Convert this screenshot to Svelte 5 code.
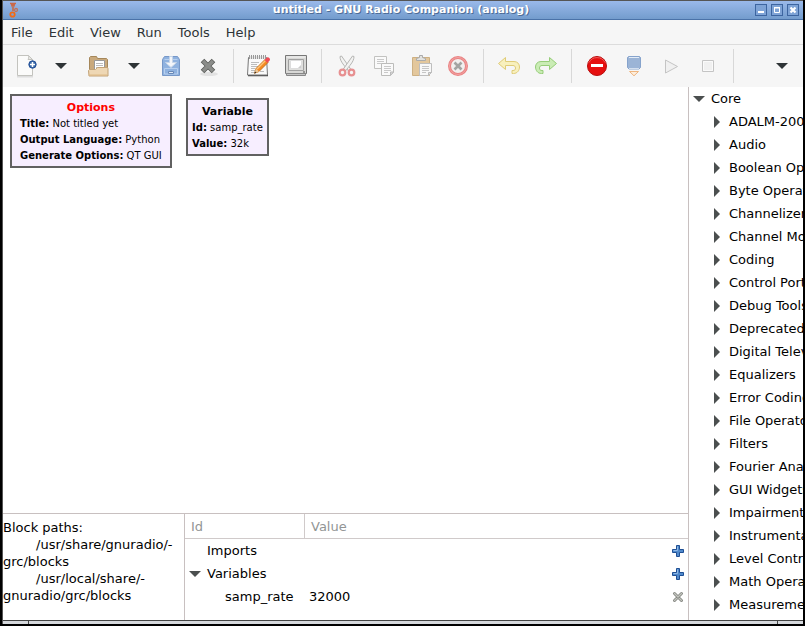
<script>
  const menus = ['File', 'Edit', 'View', 'Run', 'Tools', 'Help'];

  const groups = [
    [
      { icon: 'new', label: 'New', drop: true },
      { icon: 'open', label: 'Open', drop: true },
      { icon: 'save', label: 'Save' },
      { icon: 'close', label: 'Close' }
    ],
    [
      { icon: 'props', label: 'Properties' },
      { icon: 'screen', label: 'Screen capture' }
    ],
    [
      { icon: 'cut', label: 'Cut', off: true },
      { icon: 'copy', label: 'Copy', off: true },
      { icon: 'paste', label: 'Paste', off: true },
      { icon: 'delete', label: 'Delete', off: true }
    ],
    [
      { icon: 'undo', label: 'Undo', off: true },
      { icon: 'redo', label: 'Redo', off: true }
    ],
    [
      { icon: 'errors', label: 'Errors' },
      { icon: 'generate', label: 'Generate', off: true },
      { icon: 'play', label: 'Execute', off: true },
      { icon: 'stop', label: 'Kill', off: true }
    ]
  ];

  const categories = [
    'ADALM-2000', 'Audio', 'Boolean Operators', 'Byte Operators', 'Channelizers',
    'Channel Models', 'Coding', 'Control Port', 'Debug Tools', 'Deprecated',
    'Digital Television', 'Equalizers', 'Error Coding', 'File Operators', 'Filters',
    'Fourier Analysis', 'GUI Widgets', 'Impairment Models', 'Instrumentation',
    'Level Controllers', 'Math Operators', 'Measurement Tools'
  ];

  const blocks = [
    {
      x: 7, y: 7, title: 'Options', invalid: true,
      params: [['Title', 'Not titled yet'], ['Output Language', 'Python'], ['Generate Options', 'QT GUI']]
    },
    { x: 183, y: 11, title: 'Variable', params: [['Id', 'samp_rate'], ['Value', '32k']] }
  ];

  const consoleText =
    'Block paths:\n\t/usr/share/gnuradio/-\ngrc/blocks\n\t/usr/local/share/-\ngnuradio/grc/blocks';

  let coreOpen = $state(true);
  let varsOpen = $state(true);
</script>

{#snippet caret()}
  <svg width="12" height="6" viewBox="0 0 12 6" aria-hidden="true"><path d="M0 0h12L6 6z" fill="#2e3436" /></svg>
{/snippet}

{#snippet arrow(open)}
  <svg width="12" height="12" viewBox="0 0 12 12" aria-hidden="true">
    <path d={open ? 'M0 3h12L6 9z' : 'M3 0l6 6-6 6z'} fill="#4b4f4f" />
  </svg>
{/snippet}

{#snippet plus()}
  <svg width="12" height="12" viewBox="0 0 12 12" aria-hidden="true">
    <path d="M4.500.500h3v4h4v3h-4v4h-3v-4h-4v-3h4z" fill="#5089cb" stroke="#1f4f94" />
    <path d="M5.500 1.500v4h-4" fill="none" stroke="#8fb8e6" />
  </svg>
{/snippet}

{#snippet icon(name)}
  <svg width="24" height="24" viewBox="0 0 24 24" fill="none" aria-hidden="true">
    {#if name === 'new'}
      <path d="M4 22.500h16" stroke="#ddd" stroke-width="2" />
      <path d="M4.500 1.500h11l4 4v16h-15z" fill="#fbfbfa" stroke="#c3c3be" />
      <path d="M15.500 1.500c.5 2 0 3-.5 4h4.500z" fill="#e8e8e5" stroke="#c3c3be" />
      <circle cx="19.500" cy="10.500" r="3.700" fill="#3465a4" stroke="#27529a" />
      <path d="M19.500 8v5M17 10.500h5" stroke="#fff" stroke-width="1.600" />
    {:else if name === 'open'}
      <path d="M3.500 21V3.500l1-1h6l1 2h9l1 1V18" fill="#c9a97c" stroke="#a5875a" />
      <path d="M8.500 6.500h10v10h-10z" fill="#fff" stroke="#999" />
      <path d="M10 9.500h7M10 11.500h7M10 13.500h5" stroke="#bbb" />
      <path d="M2.500 16.500l1-1h6l2-2h10l.5 1v7.500h-19z" fill="#eed7b4" stroke="#c2a276" />
      <path d="M3 21h18" stroke="#dfba86" />
    {:else if name === 'save'}
      <path d="M3.500 5.500l2-3h13l2 3v16h-17z" fill="#8fb2df" stroke="#7798c8" />
      <path d="M5.500 5.500h13M5.500 14.500h13v5.500h-13z" stroke="#b7cfee" />
      <path d="M9.500 17.500v2h5v-2z" fill="#dfe9f5" stroke="#6889b8" />
      <path d="M10.500 2.500h3v6h4L12 13.500 6.500 8.500h4z" fill="#f3f6fa" stroke="#c6d5e8" />
    {:else if name === 'close'}
      <ellipse cx="13" cy="20" rx="9" ry="2" fill="#e2e2e2" />
      <path d="M6.500 6.500l11 11M17.500 6.500l-11 11" stroke="#5a5c59" stroke-width="5" />
      <path d="M7 7l10 10M17 7l-10 10" stroke="#8b8d8a" stroke-width="3.500" />
    {:else if name === 'props'}
      <path d="M1 21.500h20" stroke="#444" stroke-width="1.500" />
      <path d="M1.500 3.500h18l1 17.500h-20z" fill="#fafafa" stroke="#777" />
      <path d="M2 3.500h17" stroke="#e7e7e7" stroke-width="3" />
      <path d="M2.500 1v4M4.500 1v4M6.500 1v4M8.500 1v4M10.500 1v4M12.500 1v4M14.500 1v4M16.500 1v4M18.500 1v4" stroke="#999" />
      <path d="M4 8.500h8M4 10.500h6M4 12.500h7M4 14.500h4M4 16.500h4M4 18.500h5M13 17.500h4" stroke="#bcbcbc" />
      <path d="M9 14.500L18 5.500l3 3-9 9-4.500 1.800z" fill="#f58a20" stroke="#b86410" stroke-width=".8" />
      <path d="M10 15l9-9" stroke="#fcc47a" stroke-width="1.500" />
      <path d="M17.500 6l3 3 2.500-3c0-2-1.500-3-3-2.500z" fill="#ef4b55" />
      <path d="M9 14.500l3 3-4.500 1.800z" fill="#e9c79a" />
      <path d="M7.300 19.500l.8-2 1.200 1.200z" fill="#222" />
    {:else if name === 'screen'}
      <path d="M1.500 1.500h21v18h-21z" fill="#d8d8d6" stroke="#777" />
      <path d="M2.500 3h19" stroke="#f5f5f5" />
      <path d="M4.500 5.500h15v11h-15z" fill="#e0e0de" stroke="#a0a0a0" />
      <path d="M6.500 6.500h11v8h-11z" fill="#fff" stroke="#ddd" />
      <path d="M14 14l3-3v3z" fill="#ccc" />
      <path d="M2.500 19.500h19v2h-19z" fill="#c5c5c5" stroke="#888" />
      <path d="M19 18h2" stroke="#555" />
    {:else if name === 'cut'}
      <path d="M5 2.500L6.500 2 16 15.500l-2.500 1.500C10 12 5 8 5 2.500z" fill="#f2f2f1" stroke="#b5b5b3" />
      <path d="M19 2.500L17.500 2 8 15.500l2.500 1.500C14 12 19 8 19 2.500z" fill="#f2f2f1" stroke="#b5b5b3" />
      <circle cx="7.500" cy="18.500" r="2.800" stroke="#e79091" stroke-width="2.200" />
      <circle cx="16.500" cy="18.500" r="2.800" stroke="#e79091" stroke-width="2.200" />
    {:else if name === 'copy'}
      <path d="M2.500 2.500h12v12h-12z" fill="#fafafa" stroke="#c2c2c0" />
      <path d="M5 5.500h7M5 7.500h7M5 9.500h5" stroke="#c9c9c9" />
      <path d="M9.500 9.500h12v8.500l-3 3.500h-9z" fill="#fafafa" stroke="#bcbcba" />
      <path d="M12 12.500h7M12 14.500h7M12 16.500h7M12 18.500h4" stroke="#c9c9c9" />
      <path d="M21.500 18h-3v3.500z" fill="#ddd" stroke="#bbb" />
    {:else if name === 'paste'}
      <path d="M3.500 3.500h17v18h-17z" fill="#e3c79c" stroke="#cdb083" />
      <path d="M7.500 6.500v-2l3-1v-2h3v2l3 1v2z" fill="#e2e2df" stroke="#aaa" />
      <path d="M10.500 9.500h12v9l-3 3h-9z" fill="#f8f8f8" stroke="#bebebe" />
      <path d="M13 12.500h7M13 14.500h7M13 16.500h7M13 18.500h4" stroke="#c6c6c6" />
      <path d="M22.500 18.500h-3v3z" fill="#ddd" stroke="#bbb" />
    {:else if name === 'delete'}
      <circle cx="12" cy="12" r="8.500" fill="#f1efee" stroke="#e98282" stroke-width="3" />
      <circle cx="12" cy="12" r="8.500" stroke="#f3a3a3" />
      <path d="M8.500 8.500l7 7M15.500 8.500l-7 7" stroke="#a3a4a2" stroke-width="2.600" />
    {:else if name === 'undo'}
      <path d="M1.500 9.500l7-6v4H17c3.500 0 5.500 2.500 5.500 5.500s-2 6.500-6 6.500h-1.500v-3h1c2 0 2.500-1 2.500-2.500s-1-2.500-2.500-2.500H8.500v4z" fill="#f8f0bd" stroke="#e0cc78" />
    {:else if name === 'redo'}
      <path d="M22.500 9.500l-7-6v4H7c-3.500 0-5.500 2.500-5.500 5.500s2 6.500 6 6.500H9v-3H8c-2 0-2.500-1-2.500-2.500s1-2.500 2.500-2.500h7.500v4z" fill="#caecb5" stroke="#96cd79" />
    {:else if name === 'errors'}
      <circle cx="12" cy="12" r="9.500" fill="#e60f0f" stroke="#b90d0d" />
      <path d="M4 8.500a9 9 0 0 1 16 0" stroke="#f05a5a" />
      <path d="M6 10h12v3H6z" fill="#fff" />
    {:else if name === 'generate'}
      <path d="M5.500 3.500l1-1h11l1 1v10l-1.500 1.500h-10l-1.500-1.500z" fill="#9bb4d6" stroke="#86a3cc" />
      <path d="M7 3.500h10" stroke="#e3ecf7" />
      <path d="M7 14.500h10" stroke="#d3dfef" />
      <path d="M7.500 17.500h9L12 21.800z" fill="#fdeedd" stroke="#eeb57f" />
    {:else if name === 'play'}
      <path d="M6.500 6v13l12-6.500z" fill="#f0f0f0" stroke="#c4c4c4" />
    {:else if name === 'stop'}
      <path d="M6.500 6.500h11v11h-11z" fill="#f0f0f0" stroke="#c4c4c4" />
      <path d="M7.500 7.500h9v9h-9z" stroke="#fafafa" />
    {/if}
  </svg>
{/snippet}

<div class="window">
  <header class="titlebar">
    <svg class="logo" width="10" height="16" viewBox="0 0 10 16" fill="none" aria-hidden="true">
      <path d="M1 1.500h6M2 3h4M2.500 4.500h3" stroke="#c9694a" stroke-width="1.400" />
      <path d="M4 4v5" stroke="#b87868" stroke-width="2" />
      <circle cx="7" cy="8" r="1.500" stroke="#c0735c" stroke-width="1.300" />
      <circle cx="3.500" cy="12.500" r="2.200" stroke="#f26a16" stroke-width="1.800" />
    </svg>
    <h1>untitled - GNU Radio Companion (analog)</h1>
    <div class="controls">
      <button aria-label="Minimize"><svg width="10" height="10" viewBox="0 0 10 10"><path d="M2 7h6" stroke="#fff" stroke-width="2" /></svg></button>
      <button aria-label="Maximize"><svg width="10" height="10" viewBox="0 0 10 10" fill="none" stroke="#fff"><path d="M2.500 3v4.500h5V3M2 3h6" /><path d="M2 2.500h6" /></svg></button>
      <button aria-label="Close window"><svg width="10" height="10" viewBox="0 0 10 10"><path d="M2.500 2.500l5 5M7.500 2.500l-5 5" stroke="#fff" stroke-width="2.200" /></svg></button>
    </div>
  </header>

  <nav class="menubar" aria-label="Main menu">
    {#each menus as m}<button>{m}</button>{/each}
  </nav>

  <div class="toolbar" role="toolbar" aria-label="Tools">
    {#each groups as group}
      <div class="group">
        {#each group as item}
          <button class="tool" aria-label={item.label} disabled={item.off}>{@render icon(item.icon)}</button>
          {#if item.drop}
            <button class="drop" aria-label="{item.label} menu">{@render caret()}</button>
          {/if}
        {/each}
      </div>
    {/each}
    <button class="more" aria-label="More tools">{@render caret()}</button>
  </div>

  <div class="body">
    <main>
      <section class="canvas" aria-label="Flow graph">
        {#each blocks as b}
          <article class="block" class:wide={b.invalid} style="left: {b.x}px; top: {b.y}px">
            <h2 class:invalid={b.invalid}>{b.title}</h2>
            {#each b.params as [key, value]}
              <p><b>{key}:</b> {value}</p>
            {/each}
          </article>
        {/each}
      </section>

      <section class="lower">
        <pre class="console">{consoleText}</pre>
        <div class="variables">
          <table>
            <colgroup><col class="id-col" /><col /><col class="act-col" /></colgroup>
            <thead>
              <tr><th>Id</th><th colspan="2">Value</th></tr>
            </thead>
            <tbody>
              <tr>
                <td class="parent">Imports</td>
                <td></td>
                <td><button aria-label="Add import">{@render plus()}</button></td>
              </tr>
              <tr>
                <td>
                  <button class="row" aria-expanded={varsOpen} onclick={() => (varsOpen = !varsOpen)}>
                    {@render arrow(varsOpen)}Variables
                  </button>
                </td>
                <td></td>
                <td><button aria-label="Add variable">{@render plus()}</button></td>
              </tr>
              {#if varsOpen}
                <tr>
                  <td class="child">samp_rate</td>
                  <td>32000</td>
                  <td>
                    <button aria-label="Remove samp_rate">
                      <svg width="12" height="12" viewBox="0 0 12 12" fill="none" stroke-linecap="round">
                        <path d="M2.500 2.500l7 7M9.500 2.500l-7 7" stroke="#858782" stroke-width="3" />
                        <path d="M2.500 2.500l7 7M9.500 2.500l-7 7" stroke="#c2c4be" stroke-width="1.200" />
                      </svg>
                    </button>
                  </td>
                </tr>
              {/if}
            </tbody>
          </table>
        </div>
      </section>
    </main>

    <aside aria-label="Block library">
      <button class="row" aria-expanded={coreOpen} onclick={() => (coreOpen = !coreOpen)}>
        {@render arrow(coreOpen)}Core
      </button>
      {#if coreOpen}
        <ul>
          {#each categories as c}
            <li><button class="row">{@render arrow(false)}{c}</button></li>
          {/each}
        </ul>
      {/if}
    </aside>
  </div>
  <footer class="grip"></footer>
</div>

<style>
  :global(body) {
    margin: 0;
    background: #000;
  }
  .window {
    box-sizing: border-box;
    display: flex;
    flex-direction: column;
    height: 100vh;
    border: solid #000;
    border-width: 0 2px 2px;
    box-shadow: inset 1px 1px #555;
    padding: 1px 0 0 1px;
    font: 13px/17px "DejaVu Sans", sans-serif;
    color: #000;
    overflow: hidden;
  }
  button {
    margin: 0;
    padding: 0;
    border: 0;
    background: none;
    font: inherit;
    color: inherit;
    display: flex;
    align-items: center;
    white-space: nowrap;
  }
  svg {
    display: block;
    flex: none;
  }
  h1, h2, p, ul, pre {
    margin: 0;
    padding: 0;
  }

  .titlebar {
    flex: none;
    box-sizing: border-box;
    height: 19px;
    display: flex;
    align-items: center;
    padding: 0 4px 0 6px;
    background: linear-gradient(#9ab9ea, #739ccd);
    border-bottom: 1px solid #4a72a8;
  }
  .logo {
    margin-right: 28px;
  }
  h1 {
    flex: 1;
    text-align: center;
    font-size: 11px;
    line-height: 16px;
    color: #fff;
    text-shadow: 1px 1px #4d6c96;
    white-space: nowrap;
  }
  .controls {
    display: flex;
    gap: 4px;
  }
  .controls button {
    border: 1px solid #3d65a0;
    background: #7ea3d6;
  }

  .menubar {
    flex: none;
    display: flex;
    height: 24px;
    background: #f6f6f6;
    border-bottom: 1px solid #dcdcdc;
  }
  .menubar button {
    padding: 0 8px;
    color: #2e3436;
  }

  .toolbar {
    flex: none;
    display: flex;
    align-items: center;
    height: 42px;
    padding-left: 4px;
    background: #f6f6f6;
  }
  .group {
    display: flex;
    align-items: center;
    height: 34px;
    padding-right: 6px;
    margin-right: 7px;
    border-right: 1px solid #d8d8d8;
  }
  .tool {
    width: 37px;
    padding-left: 6px;
  }
  .drop {
    width: 36px;
    padding-left: 11px;
  }
  .more {
    margin-left: auto;
    padding: 0 15px;
  }

  .body {
    flex: 1;
    min-height: 0;
    display: flex;
    background: #fff;
  }
  main {
    flex: 1;
    min-width: 0;
    display: flex;
    flex-direction: column;
  }
  .canvas {
    flex: 1;
    position: relative;
    overflow: hidden;
  }
  .block {
    position: absolute;
    box-sizing: border-box;
    padding: 3px 4px 2px;
    border: 2px solid #616161;
    background: #f7eeff;
    font-size: 10px;
    line-height: 16px;
    white-space: nowrap;
  }
  .block.wide {
    padding: 3px 8px 2px;
  }
  h2 {
    font-size: 11px;
    line-height: 17px;
    text-align: center;
  }
  .invalid {
    color: #f00;
  }

  .lower {
    flex: none;
    display: flex;
    height: 106px;
    border-top: 1px solid #c8c0c0;
  }
  .console {
    flex: none;
    width: 181px;
    padding-top: 5px;
    font: inherit;
    tab-size: 8;
    overflow: hidden;
  }
  .variables {
    flex: 1;
    border-left: 1px solid #c8c0c0;
  }
  table {
    width: 100%;
    table-layout: fixed;
    border-collapse: separate;
    border-spacing: 0;
  }
  .id-col {
    width: 120px;
  }
  .act-col {
    width: 16px;
  }
  th {
    height: 24px;
    padding: 0 6px;
    border-bottom: 1px solid #d0caca;
    text-align: left;
    font-weight: normal;
    color: #929595;
  }
  th:first-child {
    border-right: 1px solid #d0caca;
  }
  td {
    height: 23px;
    padding: 0 0 0 4px;
    white-space: nowrap;
  }
  td:last-child {
    padding: 0;
  }
  .parent {
    padding-left: 22px;
  }
  .child {
    padding-left: 40px;
  }
  .row {
    height: 23px;
    gap: 6px;
  }

  aside {
    flex: none;
    width: 110px;
    padding-left: 4px;
    border-left: 1px solid #c8c0c0;
    overflow: hidden;
  }
  ul {
    list-style: none;
    padding-left: 18px;
  }

  .grip {
    flex: none;
    height: 3px;
    border-top: 1px solid #444;
    background:
      linear-gradient(#444, #444) 25px 0 / 1px 100% no-repeat,
      linear-gradient(#444, #444) calc(100% - 25px) 0 / 1px 100% no-repeat,
      #d5d8dc;
  }
</style>
